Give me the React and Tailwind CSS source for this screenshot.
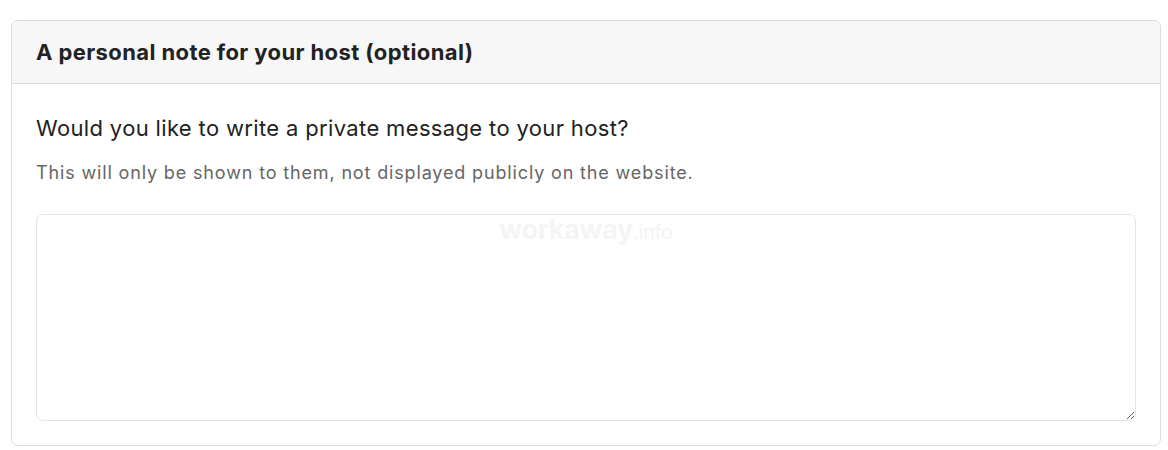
import React from 'react';

export default function App() {
  return (
    <div className="w-[1168px] h-[450px] bg-white pt-[20px] pl-[11px] pr-[7px]" style={{ fontFamily: 'Inter, "Noto Sans", sans-serif' }}>
      <div className="border border-[#dcdcdc] rounded-[7px] overflow-hidden">
        <div className="h-[63px] bg-[#f7f7f7] border-b border-[#dcdcdc] px-[24px] flex items-center">
          <h2 className="text-[22px] font-bold text-[#222] tracking-[0.4px]">A personal note for your host (optional)</h2>
        </div>
        <div className="px-[24px] pt-[30px] pb-[24px]">
          <p className="text-[22px] leading-[28px] text-[#222] tracking-[0.35px]">Would you like to write a private message to your host?</p>
          <p className="mt-[19px] text-[18px] leading-[24px] text-[#666] tracking-[0.85px]">This will only be shown to them, not displayed publicly on the website.</p>
          <div className="relative mt-[29px]">
            <textarea className="block w-full h-[207px] border border-[#e3e3e3] rounded-[7px] outline-none resize-y p-3" />
            <span className="absolute left-1/2 -translate-x-1/2 top-[-4px] text-[27px] font-bold text-[#f4f4f4] pointer-events-none select-none tracking-[-0.3px]">
              workaway<span className="font-normal text-[20px]">.info</span>
            </span>
          </div>
        </div>
      </div>
    </div>
  );
}
